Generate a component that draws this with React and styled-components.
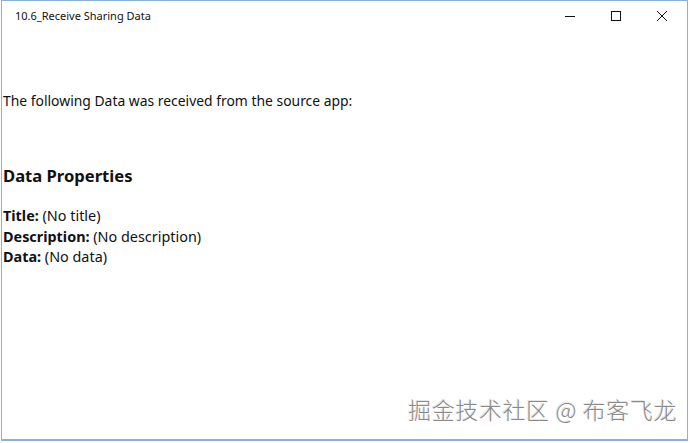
import styled, { createGlobalStyle } from 'styled-components';

const GlobalStyle = createGlobalStyle`
    html, body {
        margin: 0;
        padding: 0;
        background: #ffffff;
    }
    body {
        font-family: "Noto Sans", "Open Sans", sans-serif;
    }
`;

const Screen = styled.div`
    position: relative;
    width: 690px;
    height: 443px;
    overflow: hidden;
    background: #fdfdfd;
`;

const Window = styled.div`
    box-sizing: border-box;
    margin-left: 1px;
    width: 687px;
    height: 441px;
    border: 1px solid #8cb0d6;
    border-bottom-width: 2px;
    background: #ffffff;
    display: flex;
    flex-direction: column;
`;

const TitleBar = styled.div`
    height: 32px;
    display: flex;
    align-items: center;
    justify-content: space-between;
    flex-shrink: 0;
`;

const Title = styled.span`
    padding-left: 13px;
    padding-bottom: 3px;
    font-size: 11px;
    color: #111;
`;

const Controls = styled.div`
    display: flex;
    height: 100%;
    margin-right: 2px;
`;

const ControlButton = styled.div`
    width: 46px;
    height: 100%;
    display: flex;
    align-items: center;
    justify-content: center;
    padding-bottom: 2px;
    box-sizing: border-box;
`;

const Content = styled.div`
    padding: 58px 0 0 1px;
    color: #111;
    font-size: 13.9px;
`;

const Intro = styled.p`
    margin: 0;
    line-height: 20px;
`;

const Heading = styled.h2`
    margin: 53px 0 18px;
    font-size: 16.6px;
    font-weight: 700;
    line-height: 24px;
`;

const Row = styled.div`
    font-size: 14.4px;
    line-height: 20.5px;
    b {
        font-weight: 700;
    }
`;

const Watermark = styled.div`
    position: absolute;
    right: 13px;
    bottom: 17px;
    font-family: "Noto Sans CJK SC", sans-serif;
    font-size: 23px;
    font-weight: 300;
    color: #8a8a8a;
    letter-spacing: 0.6px;
    text-shadow: 1px 1px 0 #ffffff, -1px -1px 0 #e6e6e6;
`;

const Minimize = () => (
    <svg width="12" height="12" viewBox="0 0 12 12">
        <line x1="1" y1="6.5" x2="11" y2="6.5" stroke="#111" strokeWidth="1" />
    </svg>
);

const Maximize = () => (
    <svg width="12" height="12" viewBox="0 0 12 12">
        <rect x="1.5" y="1.5" width="9" height="9" fill="none" stroke="#111" strokeWidth="1" />
    </svg>
);

const Close = () => (
    <svg width="12" height="12" viewBox="0 0 12 12">
        <path d="M1 1 L11 11 M11 1 L1 11" stroke="#111" strokeWidth="1" />
    </svg>
);

const App = () => {
    return (
        <Screen>
            <GlobalStyle />
            <Window>
                <TitleBar>
                    <Title>10.6_Receive Sharing Data</Title>
                    <Controls>
                        <ControlButton><Minimize /></ControlButton>
                        <ControlButton><Maximize /></ControlButton>
                        <ControlButton><Close /></ControlButton>
                    </Controls>
                </TitleBar>
                <Content>
                    <Intro>The following Data was received from the source app:</Intro>
                    <Heading>Data Properties</Heading>
                    <Row><b>Title:</b> (No title)</Row>
                    <Row><b>Description:</b> (No description)</Row>
                    <Row><b>Data:</b> (No data)</Row>
                </Content>
            </Window>
            <Watermark>掘金技术社区 @ 布客飞龙</Watermark>
        </Screen>
    );
};

export default App;
